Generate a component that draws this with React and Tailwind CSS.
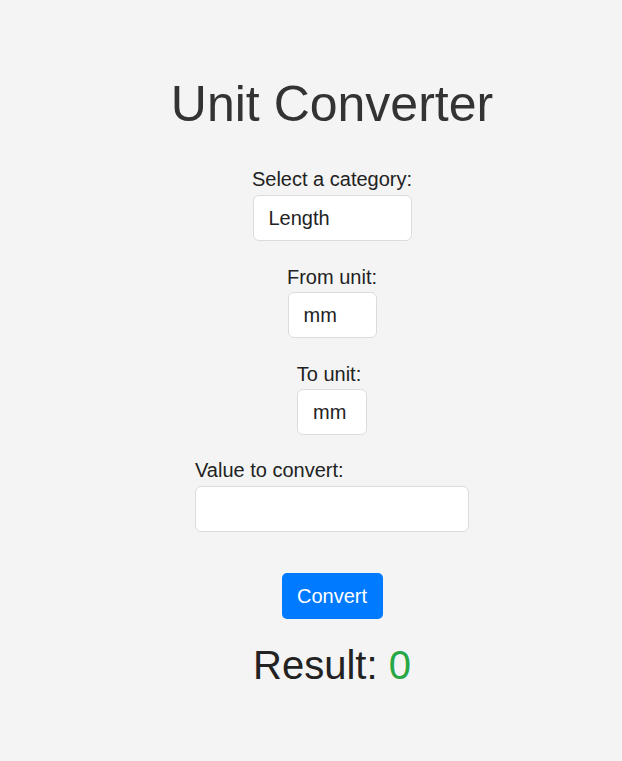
import React from "react";

export default function App() {
  return (
    <div className="min-h-screen bg-[#f4f4f4] font-['Liberation_Sans',Arial,sans-serif]">
      <div className="flex flex-col items-center pl-[42px] pt-[76px]">
        <h1 className="text-[50px] leading-[57px] font-normal text-[#333333]">Unit Converter</h1>

        <label className="mt-[35px] text-[20px] leading-[23px] text-[#222222]">Select a category:</label>
        <select
          defaultValue="Length"
          className="mt-[4px] h-[46px] w-[159px] appearance-none rounded-[6px] border border-[#dcdcdc] bg-white px-[15px] text-[20px] text-[#222222] outline-none"
        >
          <option>Length</option>
          <option>Weight</option>
          <option>Temperature</option>
        </select>

        <label className="mt-[25px] text-[20px] leading-[23px] text-[#222222]">From unit:</label>
        <select
          defaultValue="mm"
          className="mt-[3px] h-[46px] w-[89px] appearance-none rounded-[6px] border border-[#dcdcdc] bg-white px-[15px] text-[20px] text-[#222222] outline-none"
        >
          <option>mm</option>
          <option>cm</option>
          <option>m</option>
          <option>km</option>
        </select>

        <label className="mt-[25px] pr-[6px] text-[20px] leading-[23px] text-[#222222]">To unit:</label>
        <select
          defaultValue="mm"
          className="mt-[3px] h-[46px] w-[70px] appearance-none rounded-[6px] border border-[#dcdcdc] bg-white px-[15px] text-[20px] text-[#222222] outline-none"
        >
          <option>mm</option>
          <option>cm</option>
          <option>m</option>
          <option>km</option>
        </select>

        <div className="mt-[24px] flex flex-col items-start">
          <label className="text-[20px] leading-[23px] text-[#222222]">Value to convert:</label>
          <input
            type="text"
            className="mt-[4px] h-[46px] w-[274px] rounded-[6px] border border-[#dcdcdc] bg-white px-[15px] text-[20px] text-[#222222] outline-none"
          />
        </div>

        <button className="mt-[41px] h-[46px] w-[101px] rounded-[5px] bg-[#007bff] text-[20px] text-white">
          Convert
        </button>

        <p className="mt-[23px] text-[40px] leading-[46px] text-[#222222]">
          Result: <span className="text-[#28a745]">0</span>
        </p>
      </div>
    </div>
  );
}
